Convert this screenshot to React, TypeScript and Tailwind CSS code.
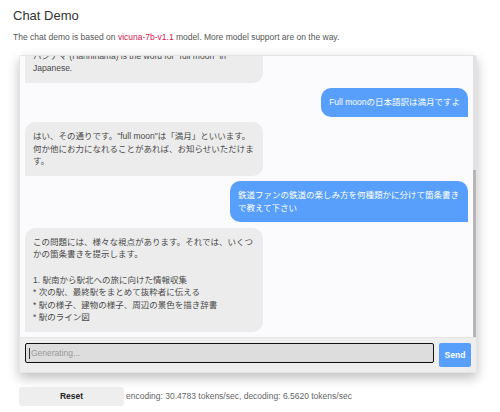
const font = { fontFamily: '"Liberation Sans", "Noto Sans CJK JP", sans-serif' };

type Msg = { from: "bot" | "user"; lines: string[] };

const messages: Msg[] = [
  { from: "bot", lines: ["ハンナマ (Hanninama) is the word for \"full moon\" in Japanese."] },
  { from: "user", lines: ["Full moonの日本語訳は満月ですよ"] },
  { from: "bot", lines: ["はい、その通りです。\"full moon\"は「満月」といいます。何か他にお力になれることがあれば、お知らせいただけます。"] },
  { from: "user", lines: ["鉄道ファンの鉄道の楽しみ方を何種類かに分けて箇条書きで教えて下さい"] },
  {
    from: "bot",
    lines: [
      "この問題には、様々な視点があります。それでは、いくつかの箇条書きを提示します。",
      "",
      "1. 駅南から駅北への旅に向けた情報収集",
      "* 次の駅、最終駅をまとめて抜粋者に伝える",
      "* 駅の様子、建物の様子、周辺の景色を描き辞書",
      "* 駅のライン図",
    ],
  },
];

function Bubble({ msg }: { msg: Msg }) {
  if (msg.from === "user") {
    return (
      <div className="ml-auto max-w-[238px] rounded-[10px] rounded-br-none bg-[#579ffb] p-2 text-[8.5px] leading-[12.6px] text-white">
        {msg.lines[0]}
      </div>
    );
  }
  return (
    <div className="w-[238px] shrink-0 rounded-[10px] rounded-bl-none bg-[#ececec] p-2 text-[8.5px] leading-[12.6px] text-[#4a4a4a]">
      {msg.lines.map((l, i) => (
        <div key={i} className="min-h-[12.6px]">{l}</div>
      ))}
    </div>
  );
}

export default function App() {
  return (
    <div className="h-[412px] w-[500px] overflow-hidden bg-white" style={font}>
      <div className="px-[13px] pt-[7px]">
        <h1 className="text-[13px] leading-[18px] text-[#333]">Chat Demo</h1>
        <p className="mt-[6px] text-[8.5px] leading-[12px] text-[#555]">
          The chat demo is based on <span className="text-[#d6204e]">vicuna-7b-v1.1</span> model. More model support are on the way.
        </p>
      </div>

      <div className="ml-[19px] mt-[12px] w-[458px] rounded-[3px] border border-[#e4e4e4] shadow-[0_5px_12px_rgba(0,0,0,0.25)]">
        <div className="relative flex h-[281px] flex-col justify-end gap-[5.4px] overflow-hidden bg-[#fbfbfe] pb-[5px] pl-[5px] pr-[8px]">
          {messages.map((m, i) => (
            <Bubble key={i} msg={m} />
          ))}
          <div className="absolute right-0 top-0 h-full w-[3px] bg-[#e2e2e2]" />
          <div className="absolute bottom-0 right-0 h-[167px] w-[3px] bg-[#b5b5b5]" />
        </div>
        <div className="flex h-[35px] items-start gap-[5px] border-t border-[#e4e4e4] bg-[#eeeeee] px-[5px] pt-[5px]">
          <div className="flex h-[20px] flex-1 items-center rounded-[2px] border border-[#111] bg-[#dddddd] pl-[3px] text-[8.5px] text-[#999]">
            <span className="mr-px h-[11px] w-px bg-[#333]" />
            Generating...
          </div>
          <button className="h-[24px] w-[32px] rounded-[2px] bg-[#579ffb] text-[8.5px] font-bold text-white">Send</button>
        </div>
      </div>

      <div className="ml-[19px] mt-[14px] flex items-center gap-[2px]">
        <button className="h-[19px] w-[105px] rounded-[3px] bg-[#eeeeee] text-[8.5px] font-bold text-[#222]">Reset</button>
        <span className="text-[8.5px] text-[#666]">encoding: 30.4783 tokens/sec, decoding: 6.5620 tokens/sec</span>
      </div>
    </div>
  );
}
